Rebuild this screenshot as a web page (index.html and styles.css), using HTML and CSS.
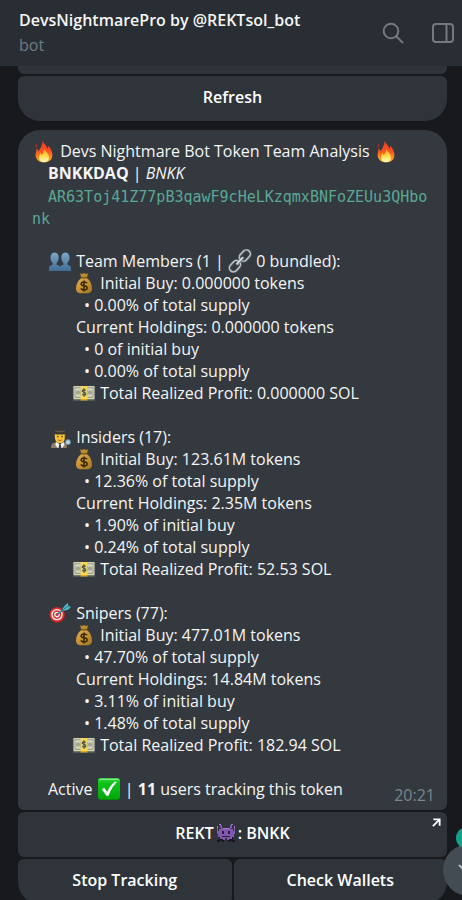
FILE: index.html
```
<!DOCTYPE html>
<html lang="en">
<head>
  <meta charset="UTF-8" />
  <meta name="viewport" content="width=device-width, initial-scale=1" />
  <title>DevsNightmarePro</title>
  <link rel="stylesheet" href="styles.css">
</head>
<body>
  <!-- emoji drawings, reused with <use> -->
  <svg class="sprites" aria-hidden="true">
    <linearGradient id="fireOuter" x1="0" y1="0" x2="0" y2="1">
      <stop offset="0" stop-color="#e8392b" />
      <stop offset="0.5" stop-color="#f8541f" />
      <stop offset="1" stop-color="#ffb52e" />
    </linearGradient>
    <linearGradient id="fireInner" x1="0" y1="0" x2="0" y2="1">
      <stop offset="0" stop-color="#ff9a1f" />
      <stop offset="0.55" stop-color="#ffdd45" />
      <stop offset="1" stop-color="#fffbd0" />
    </linearGradient>
    <linearGradient id="bust" x1="0" y1="0" x2="0" y2="1">
      <stop offset="0" stop-color="#7da7c8" />
      <stop offset="1" stop-color="#3f6d94" />
    </linearGradient>
    <linearGradient id="bag" x1="0" y1="0" x2="1" y2="1">
      <stop offset="0" stop-color="#e3b04a" />
      <stop offset="1" stop-color="#a8741c" />
    </linearGradient>
    <linearGradient id="tick" x1="0" y1="0" x2="0" y2="1">
      <stop offset="0" stop-color="#3fd64a" />
      <stop offset="0.25" stop-color="#0cc415" />
      <stop offset="1" stop-color="#02a80b" />
    </linearGradient>

    <symbol id="fire" viewBox="0 0 24 24">
      <path fill="url(#fireOuter)" d="M10.400 1c.3 3.200 4.200 4.800 5 8.800.7-.7.8-2 .4-3.300 2.800 2.300 4.600 5.800 4.600 9.500 0 4.700-3.500 7.500-8.300 7.500s-8.500-2.800-8.500-7.400c0-2.700 1-4.300.9-6.800 1 .6 1.600 1.600 1.700 3.100 2-2.500 4.700-6.800 4.200-11.400z" />
      <path fill="#e8392b" d="M4.100 5c.8 1 .9 2.200.2 3.300-.6-1-.7-2.200-.2-3.300z" />
      <path fill="url(#fireInner)" d="M12.300 9.500c.2 2.600 4.600 4.700 4.600 8.900 0 2.800-2 4.600-4.800 4.600s-5-1.700-5-4.500c0-1.700.7-2.800 1.100-4.200.8.400 1.200 1.200 1.300 2 1.600-1.600 2.900-4.100 2.800-6.800z" />
    </symbol>

    <symbol id="team" viewBox="0 0 24 24">
      <g fill="url(#bust)">
        <path d="M2.500 8.500c0-3.200 1.600-5 4.100-5s4.100 1.800 4.100 5c0 2.500-.9 4.300-2.100 5.300v1.900c1.900.8 3.600 1.100 3.600 3.100V22H1v-3.200c0-2 1.700-2.300 3.600-3.100v-1.900C3.400 12.800 2.500 11 2.500 8.500z" />
        <path d="M13.300 8.500c0-3.200 1.600-5 4.100-5s4.100 1.800 4.100 5c0 2.500-.9 4.300-2.100 5.300v1.900c1.900.8 3.600 1.100 3.600 3.100V22H11.800v-3.200c0-2 1.700-2.300 3.600-3.100v-1.900c-1.200-1-2.100-2.800-2.100-5.300z" />
      </g>
    </symbol>

    <symbol id="link" viewBox="0 0 24 24">
      <g transform="rotate(-47 12 12)" fill="none">
        <rect x="-1.500" y="8" width="12.500" height="8" rx="4" stroke="#596066" stroke-width="2.800" />
        <rect x="-1.500" y="7.800" width="12.500" height="8" rx="4" stroke="#c3c9cd" stroke-width="1.300" />
        <rect x="13" y="8" width="12.500" height="8" rx="4" stroke="#596066" stroke-width="2.800" />
        <rect x="13" y="7.800" width="12.500" height="8" rx="4" stroke="#c3c9cd" stroke-width="1.300" />
        <path d="M8 12h8" stroke="#7a8288" stroke-width="3" stroke-linecap="round" />
        <path d="M8 11.600h8" stroke="#e3e6e8" stroke-width="1.500" stroke-linecap="round" />
      </g>
    </symbol>

    <symbol id="moneybag" viewBox="0 0 24 24">
      <path fill="#c08a2c" d="M8 2.300l2.300.7 1.900-1 1.800 1 2.200-.7-1.400 4.500H9.400z" />
      <path fill="url(#bag)" d="M9.200 7h5.800c3 2.400 5 6.400 5 10.600 0 3.200-1.700 4.600-4 4.600H8c-2.300 0-4-1.400-4-4.600C4 13.400 6.200 9.400 9.200 7z" />
      <path d="M9 6.900h6.200" stroke="#7c5412" stroke-width="1.400" stroke-linecap="round" />
      <path d="M15 12.200c-.6-.9-1.700-1.200-3-1.200-1.600 0-2.800.7-2.800 1.900 0 2.700 5.900 1.200 5.900 4 0 1.300-1.300 2-3 2-1.400 0-2.600-.4-3.200-1.400M12 9.500v11" fill="none" stroke="#35260a" stroke-width="1.500" />
    </symbol>

    <symbol id="cash" viewBox="0 0 24 24">
      <path fill="#77796a" d="M1.500 6h21v13.500h-21z" />
      <path fill="#d3d3bc" d="M1.500 5h21v13h-21z" />
      <path fill="none" stroke="#8d9080" stroke-width=".8" d="M3 6.600h18v9.800H3z" />
      <circle cx="6" cy="11.500" r="2" fill="#a0a292" />
      <circle cx="18" cy="11.500" r="2" fill="#a0a292" />
      <ellipse cx="12" cy="11.500" rx="4.800" ry="4.300" fill="#a7a993" />
      <path fill="#f7d94c" d="M8.600 5h6.800v13H8.600z" />
      <path fill="#d9a91f" d="M8.600 18h6.800v1.500H8.600z" />
      <ellipse cx="12" cy="11.500" rx="2.900" ry="4.200" fill="#d8cc83" />
      <path d="M13.800 9.500c-.9-1.200-3.500-1-3.500.4 0 1.800 3.500 1 3.500 3 0 1.500-2.700 1.600-3.600.3M12 7.300v8.500" fill="none" stroke="#4d4930" stroke-width="1.100" />
    </symbol>

    <symbol id="detective" viewBox="0 0 24 24">
      <path fill="#70543c" d="M6.200 8h11.200v4.500H6.200z" />
      <path fill="#f9c433" d="M7 8h9.700v5.500c0 2.700-2.100 4.700-4.900 4.700S7 16.200 7 13.500z" />
      <path fill="#3b3735" d="M7.200 5.800C7.500 2.500 8.700.9 10.400 1c.7 0 1 .4 1.600.4s1-.4 1.700-.4c1.700-.1 2.700 1.500 3 4.800 1.900.5 3.500 1 3.500 1.900 0 1.100-3.800 1.800-8.300 1.800s-8.400-.7-8.400-1.800c0-.9 1.700-1.400 3.700-1.900z" />
      <path fill="#5f5a56" d="M7.200 5.300c2.900.9 6.600.9 9.500 0l.2 1.300c-3 .9-7 .9-9.900 0z" />
      <circle cx="9.800" cy="11.600" r=".8" fill="#493226" />
      <circle cx="14" cy="11.600" r=".8" fill="#493226" />
      <path d="M10.300 15c1 .6 2.300.6 3.200 0" fill="none" stroke="#7a4a22" stroke-width=".9" />
      <path fill="#8f7d66" d="M3 23c0-4 2-5.400 5.300-6l3.600 3 3.600-3c3.300.6 5 2 5 6z" />
      <path fill="#f2f2f2" d="M8.300 16.900l3.600 2.700 3.600-2.700 1 3.200-2.500 2.900H9.700l-2.500-2.900z" />
      <path fill="#3d4043" d="M11.200 19.300h1.500l.6 3.700h-2.800z" />
      <path d="M19.600 19.500v3.700" stroke="#333" stroke-width="1.500" />
      <circle cx="20" cy="17.200" r="2.700" fill="#a8d4ef" stroke="#607482" stroke-width="1" />
    </symbol>

    <symbol id="target" viewBox="0 0 24 24">
      <ellipse cx="9.200" cy="14.200" rx="7.800" ry="7.600" fill="#a81f22" />
      <circle cx="9" cy="13.600" r="7.400" fill="#d9302f" />
      <circle cx="9" cy="13.600" r="5.700" fill="#f5f0ef" />
      <circle cx="9" cy="13.600" r="4.300" fill="#d9302f" />
      <circle cx="9" cy="13.600" r="2.800" fill="#f5f0ef" />
      <circle cx="9" cy="13.600" r="1.500" fill="#d9302f" />
      <path d="M9 13.600l8.500-6.800" stroke="#2c7f92" stroke-width="1.800" />
      <path fill="#4cb6c6" d="M14.500 7.800l2.400-3.200 3-2.600.6 2.900 2.500 1-2.900 2.900-4.200 1z" />
      <path d="M15.500 8.600l5.200-4" stroke="#23707f" stroke-width=".9" />
    </symbol>

    <symbol id="check" viewBox="0 0 24 24">
      <rect x="1" y="1" width="22" height="22" rx="3" fill="#07870e" />
      <rect x="1" y="1" width="22" height="21" rx="3" fill="url(#tick)" />
      <path d="M3 2.500h18" stroke="#83ec87" stroke-width="1.200" stroke-linecap="round" />
      <path fill="#fff" d="M4.800 12.200l2.400-1.500 3 4.300C12 10.600 14.700 7 18.200 4.600l1.500.7c-3.600 3.700-6.200 8-8.100 13.400H9.300z" />
    </symbol>

    <symbol id="alien" viewBox="0 0 24 24">
      <path fill="#1d1428" d="M5 16h3v4H5zM16 16h3v4h-3zM3 19h3v2H3zM18 19h3v2h-3zM8 18h2v3H8zM14 18h2v3h-2z" />
      <path fill="#8059ae" d="M7 7h10v1h2v2h1v6h-2v2h-3v1h-2v-2h-2v2H9v-1H6v-2H4v-6h1V8h2z" />
      <path fill="#8059ae" d="M6 4h2v3H6zM16 4h2v3h-2zM3 6h1v5h1v2H3zM20 6h1v7h-2v-2h1z" />
      <path fill="#2b1b3d" d="M8 10h2v3H8zM14 10h2v3h-2zM8 15h8v1H8z" />
      <path fill="#a77bd1" d="M9 7h6v1H9zM3 5h1v2H3zM20 5h1v2h-1zM5 3h2v1H5zM17 3h2v1h-2z" />
    </symbol>
  </svg>

  <div class="app">
    <header class="topbar">
      <div class="peer">
        <h1 class="peer-name">DevsNightmarePro by @REKTsol_bot</h1>
        <p class="peer-status">bot</p>
      </div>
      <button class="icon-btn" type="button" aria-label="Search">
        <svg width="24" height="24" viewBox="0 0 24 24" fill="none" stroke="currentColor" stroke-width="2" stroke-linecap="round">
          <circle cx="10" cy="10" r="7.300" />
          <path d="M15.500 15.500l6 6" />
        </svg>
      </button>
      <button class="icon-btn" type="button" aria-label="Toggle info panel">
        <svg width="24" height="24" viewBox="0 0 24 24" fill="none" stroke="currentColor" stroke-width="2">
          <rect x="2" y="3" width="20" height="18" rx="3" />
          <path d="M15.500 3v18" />
        </svg>
      </button>
    </header>

    <main class="thread">
      <div class="keyboard">
        <div class="key-stub"></div>
        <button class="key key-last" type="button">Refresh</button>
      </div>

      <article class="bubble">
        <p><svg class="emoji"><use href="#fire" /></svg> Devs Nightmare Bot Token Team Analysis <svg class="emoji"><use href="#fire" /></svg></p>
        <p class="in-1"><strong>BNKKDAQ</strong> | <em>BNKK</em></p>
        <p class="address">AR63Toj41Z77pB3qawF9cHeLKzqmxBNFoZEUu3QHbonk</p>

        <section class="group">
          <p class="in-1"><svg class="emoji"><use href="#team" /></svg> Team Members (1 | <svg class="emoji"><use href="#link" /></svg> 0 bundled):</p>
          <p class="in-2"><svg class="emoji"><use href="#moneybag" /></svg> Initial Buy: 0.000000 tokens</p>
          <p class="in-4">• 0.00% of total supply</p>
          <p class="in-3">Current Holdings: 0.000000 tokens</p>
          <p class="in-4">• 0 of initial buy</p>
          <p class="in-4">• 0.00% of total supply</p>
          <p class="in-2"><svg class="emoji"><use href="#cash" /></svg> Total Realized Profit: 0.000000 SOL</p>
        </section>

        <section class="group">
          <p class="in-1"><svg class="emoji"><use href="#detective" /></svg> Insiders (17):</p>
          <p class="in-2"><svg class="emoji"><use href="#moneybag" /></svg> Initial Buy: 123.61M tokens</p>
          <p class="in-4">• 12.36% of total supply</p>
          <p class="in-3">Current Holdings: 2.35M tokens</p>
          <p class="in-4">• 1.90% of initial buy</p>
          <p class="in-4">• 0.24% of total supply</p>
          <p class="in-2"><svg class="emoji"><use href="#cash" /></svg> Total Realized Profit: 52.53 SOL</p>
        </section>

        <section class="group">
          <p class="in-1"><svg class="emoji"><use href="#target" /></svg> Snipers (77):</p>
          <p class="in-2"><svg class="emoji"><use href="#moneybag" /></svg> Initial Buy: 477.01M tokens</p>
          <p class="in-4">• 47.70% of total supply</p>
          <p class="in-3">Current Holdings: 14.84M tokens</p>
          <p class="in-4">• 3.11% of initial buy</p>
          <p class="in-4">• 1.48% of total supply</p>
          <p class="in-2"><svg class="emoji"><use href="#cash" /></svg> Total Realized Profit: 182.94 SOL</p>
        </section>

        <footer class="group bubble-foot">
          <p class="in-1">Active <svg class="emoji"><use href="#check" /></svg> | <strong>11</strong> users tracking this token</p>
          <time class="time">20:21</time>
        </footer>
      </article>

      <div class="keyboard">
        <a class="key" href="#rekt">REKT<svg class="emoji"><use href="#alien" /></svg>: BNKK
          <svg class="key-arrow" viewBox="0 0 10 10" fill="none" stroke="currentColor" stroke-width="2">
            <path d="M1.500 1.500h7v7M8.500 1.500l-7.500 7.500" />
          </svg>
        </a>
        <div class="key-row">
          <button class="key key-bl" type="button">Stop Tracking</button>
          <button class="key key-br" type="button">Check Wallets</button>
        </div>
      </div>

      <button class="to-bottom" type="button" aria-label="Scroll to bottom">
        <svg width="24" height="24" viewBox="0 0 24 24" fill="none" stroke="currentColor" stroke-width="2">
          <path d="M2 7l10 10L22 7" />
        </svg>
        <span class="unread"></span>
      </button>
    </main>
  </div>
</body>
</html>
```
FILE: styles.css
```
* {
  box-sizing: border-box;
}

body {
  margin: 0;
  background: #18191d;
  color: #f5f5f5;
  font-family: "Open Sans", "Noto Sans", sans-serif;
  font-size: 16px;
  line-height: 22px;
}

h1, p {
  margin: 0;
}

button {
  border: none;
  font: inherit;
  cursor: pointer;
}

.sprites {
  position: absolute;
  width: 0;
  height: 0;
}

.app {
  display: flex;
  flex-direction: column;
  height: 100vh;
  overflow: hidden;
}

/* header */
.topbar {
  display: flex;
  flex: none;
  align-items: center;
  gap: 10px;
  height: 66px;
  padding-left: 19px;
  background: #282e33;
}

.peer {
  flex: 1;
  min-width: 0;
}

.peer-name {
  font-size: 16px;
  font-weight: 600;
  line-height: 24px;
  white-space: nowrap;
}

.peer-status {
  line-height: 26px;
  color: #737b82;
}

.icon-btn {
  display: flex;
  padding: 8px;
  background: none;
  color: #75797d;
}

.icon-btn + .icon-btn {
  margin-right: -1px;
}

/* messages */
.thread {
  position: relative;
  flex: 1;
  min-height: 0;
  padding: 0 15px 0 18px;
  overflow: hidden;
}

.keyboard {
  display: flex;
  flex-direction: column;
  gap: 2px;
}

.key-stub {
  height: 8px;
  background: #2e343a;
  border-radius: 0 0 6px 6px;
}

.key-row {
  display: grid;
  grid-template-columns: 1fr 1fr;
  gap: 2px;
}

.key {
  position: relative;
  display: block;
  width: 100%;
  padding: 10px 12px 13px;
  background: #2e343a;
  border-radius: 6px;
  color: #fff;
  font-weight: 600;
  text-align: center;
  text-decoration: none;
}

.key-last {
  border-radius: 6px 6px 22px 22px;
}

.key-bl {
  border-bottom-left-radius: 22px;
}

.key-br {
  border-bottom-right-radius: 22px;
}

.key-arrow {
  position: absolute;
  top: 6px;
  right: 6px;
  width: 9px;
  height: 9px;
}

.bubble {
  margin: 9px 0 2px;
  padding: 10px 12px 10px 14px;
  background: #33393f;
  border-radius: 22px 22px 6px 6px;
}

.bubble strong {
  font-weight: 700;
}

.group {
  margin-top: 22px;
}

.in-1 {
  padding-left: 16px;
}

.in-2 {
  padding-left: 40px;
}

.in-3 {
  padding-left: 44px;
}

.in-4 {
  padding-left: 52px;
}

.address {
  padding-top: 2px;
  margin-bottom: -2px;
  text-indent: 16px;
  word-break: break-all;
  color: #5aa895;
  font-family: "DejaVu Sans Mono", monospace;
  font-size: 15px;
}

.emoji {
  width: 24px;
  height: 24px;
  margin: -4px 0;
  vertical-align: -2px;
}

.bubble-foot {
  display: flex;
  justify-content: space-between;
}

.time {
  margin-bottom: -6px;
  padding-top: 6px;
  color: #7b858d;
}

/* scroll button, hangs over the right edge */
.to-bottom {
  position: absolute;
  right: -33px;
  bottom: 4px;
  display: flex;
  align-items: center;
  justify-content: center;
  width: 52px;
  height: 52px;
  padding: 0;
  background: #434b53;
  border-radius: 50%;
  color: #b5babe;
}

.unread {
  position: absolute;
  top: -17px;
  left: 13px;
  width: 26px;
  height: 22px;
  background: #12a08a;
  border-radius: 11px;
}
```
